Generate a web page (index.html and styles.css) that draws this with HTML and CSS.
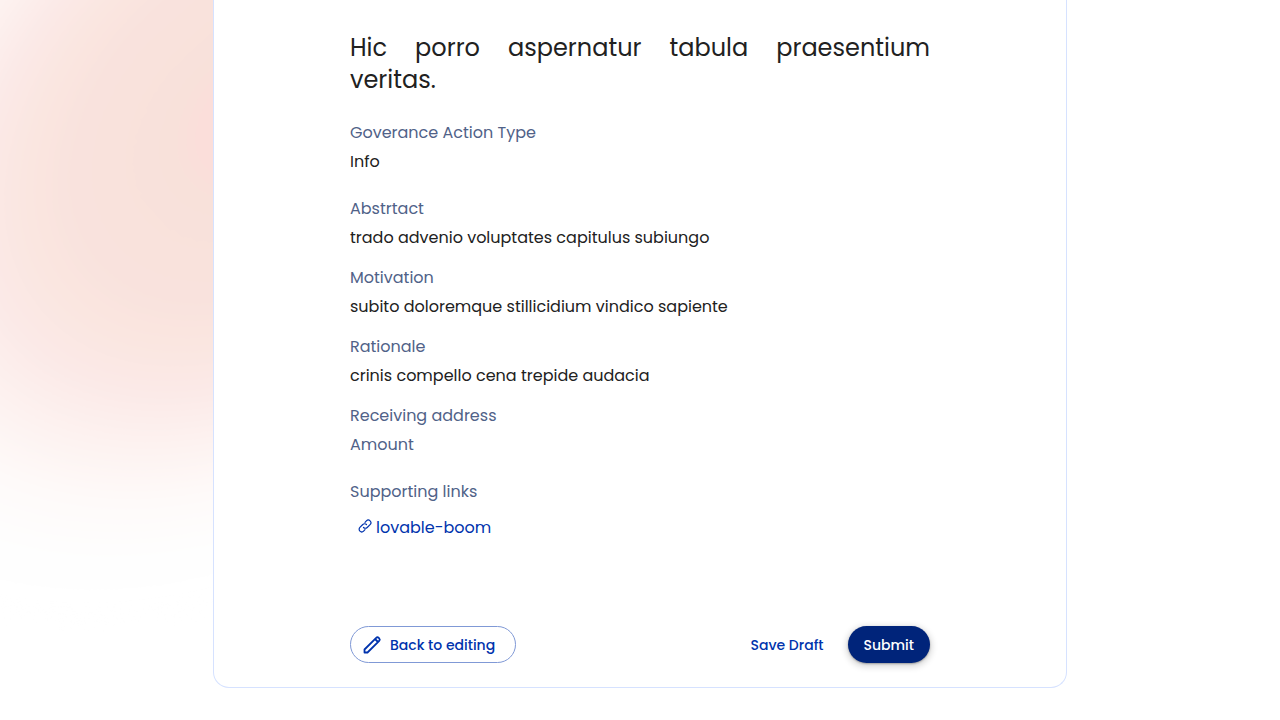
FILE: index.html
```html
<!DOCTYPE html>
<html lang="en">
<head>
<meta charset="utf-8">
<meta name="viewport" content="width=device-width, initial-scale=1">
<title>Review governance action</title>
<link rel="stylesheet" href="styles.css">
</head>
<body>
<svg class="glow" width="900" height="720" viewBox="0 0 900 720" aria-hidden="true">
  <defs>
    <radialGradient id="warm">
      <stop offset="0" stop-color="#fbdeda"/>
      <stop offset=".13" stop-color="#fbdeda"/>
      <stop offset=".17" stop-color="#f8e1da"/>
      <stop offset=".36" stop-color="#f9e2dd"/>
      <stop offset=".45" stop-color="#fae6e0"/>
      <stop offset=".54" stop-color="#fbe9e7"/>
      <stop offset=".65" stop-color="#fdf2f0"/>
      <stop offset=".76" stop-color="#fefaf9"/>
      <stop offset=".88" stop-color="#fefefe"/>
      <stop offset="1" stop-color="#fff"/>
    </radialGradient>
    <filter id="soft" filterUnits="userSpaceOnUse" x="-800" y="-800" width="2200" height="2200" color-interpolation-filters="sRGB">
      <feGaussianBlur stdDeviation="8"/>
    </filter>
  </defs>
  <ellipse cx="265" cy="115" rx="600" ry="420" transform="rotate(-42 265 115)" fill="url(#warm)" filter="url(#soft)"/>
</svg>
<main class="card">
  <article class="content">
    <h1 class="title">Hic porro aspernatur tabula praesentium veritas.</h1>
    <dl class="details">
      <div class="section">
        <div class="field"><dt>Goverance Action Type</dt><dd>Info</dd></div>
      </div>
      <div class="section">
        <div class="field"><dt>Abstrtact</dt><dd>trado advenio voluptates capitulus subiungo</dd></div>
        <div class="field"><dt>Motivation</dt><dd>subito doloremque stillicidium vindico sapiente</dd></div>
        <div class="field"><dt>Rationale</dt><dd>crinis compello cena trepide audacia</dd></div>
        <div class="field"><dt>Receiving address</dt><dt>Amount</dt></div>
      </div>
      <div class="section">
        <div class="field links"><dt>Supporting links</dt>
          <dd><a class="link" href="#lovable-boom"><svg class="link-icon" viewBox="0 0 14 14" aria-hidden="true"><path d="M5.500 8.500a2.600 2.600 0 0 0 3.700 0l2.900-2.900a2.600 2.600 0 0 0-3.700-3.700L7 3.300M8.500 5.500a2.600 2.600 0 0 0-3.700 0L1.900 8.400a2.600 2.600 0 0 0 3.700 3.700L7 10.700"/></svg>lovable-boom</a></dd>
        </div>
      </div>
    </dl>
    <div class="actions">
      <button class="button outlined" type="button"><svg class="edit-icon" viewBox="0 0 20 20" aria-hidden="true"><path d="M2.500 17.500v-3L14.200 2.800a1.800 1.800 0 0 1 2.500 0l.5.5a1.800 1.800 0 0 1 0 2.500L5.500 17.500zM13 4l3 3"/></svg>Back to editing</button>
      <div class="primary-actions">
        <button class="button" type="button">Save Draft</button>
        <button class="button contained" type="button">Submit</button>
      </div>
    </div>
  </article>
</main>
</body>
</html>
```
FILE: styles.css
```css
* { box-sizing: border-box; }

body {
  position: relative;
  margin: 0;
  padding-bottom: 32px;
  background: #fff;
  color: #212121;
  font: 400 16px/24px Poppins, Inter, sans-serif;
  overflow-x: hidden;
}

.glow {
  position: absolute;
  top: 0;
  left: 0;
  z-index: -1;
  overflow: hidden;
}

.card {
  width: 66.7%;
  margin: 0 auto;
  padding: 32px 24px 24px;
  background: #fff;
  border: 1px solid #d6e2ff;
  border-top: 0;
  border-radius: 0 0 16px 16px;
}

.content {
  max-width: 580px;
  margin: 0 auto;
}

.title {
  margin: 0 0 25px;
  font-size: 24px;
  font-weight: 400;
  line-height: 32px;
  text-align: justify;
}

.details {
  display: flex;
  flex-direction: column;
  gap: 23px;
  margin: 0 0 86px;
}

.section {
  display: flex;
  flex-direction: column;
  gap: 16px;
}

.field {
  display: flex;
  flex-direction: column;
  gap: 5px;
}

.field dt { color: #506288; }
.field dd { margin: 0; }
.links { gap: 12px; }

.link {
  display: flex;
  align-items: center;
  gap: 4px;
  padding-left: 8px;
  color: #0033ad;
  text-decoration: none;
}

.link-icon, .edit-icon {
  fill: none;
  stroke: currentColor;
  stroke-linecap: round;
  stroke-linejoin: round;
}

.link-icon { width: 14px; height: 14px; margin-bottom: 4px; stroke-width: 1.2; }
.edit-icon { width: 20px; height: 20px; stroke-width: 1.8; }

.actions, .primary-actions {
  display: flex;
  flex-wrap: wrap;
  justify-content: space-between;
  gap: 8px;
}

.button {
  display: inline-flex;
  align-items: center;
  gap: 8px;
  min-height: 37px;
  padding: 6px 16px;
  border: 0;
  border-radius: 100px;
  background: transparent;
  color: #0033ad;
  font: 500 14px/24px Poppins, Inter, sans-serif;
  cursor: pointer;
}

.outlined {
  min-width: 166px;
  padding: 5px 15px 5px 11px;
  border: 1px solid #8099d6;
}

.contained {
  background: #00247a;
  color: #fff;
  box-shadow: 0 1px 2px rgba(0, 0, 0, .3), 0 2px 6px 2px rgba(0, 0, 0, .15);
}
```
